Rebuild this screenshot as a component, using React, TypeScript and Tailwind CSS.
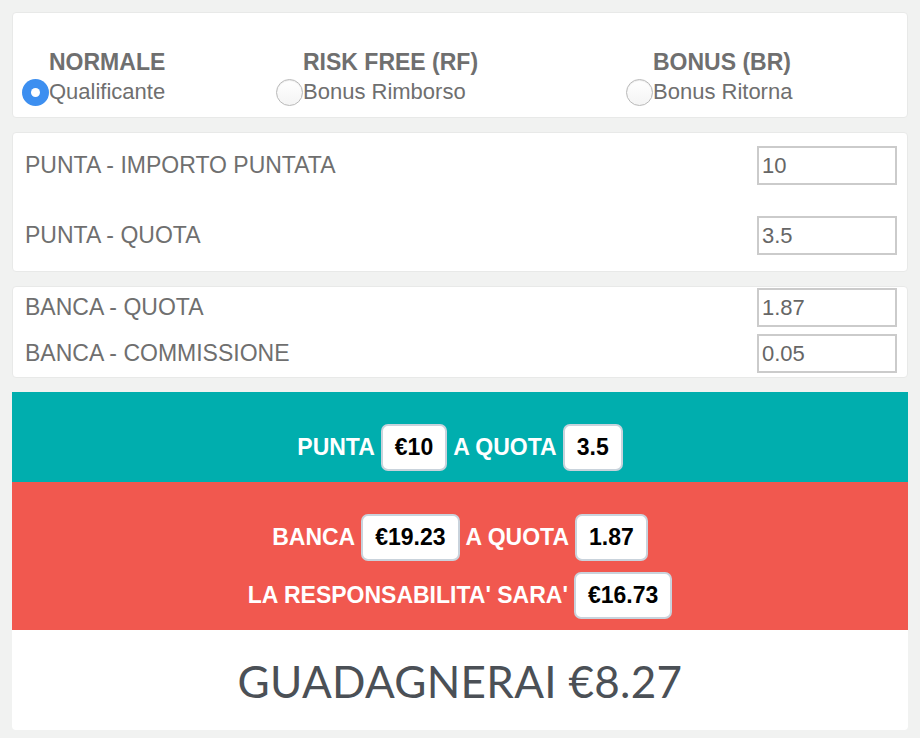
const modes = [
  { title: 'NORMALE', label: 'Qualificante', checked: true, width: 'w-[254px]' },
  { title: 'RISK FREE (RF)', label: 'Bonus Rimborso', checked: false, width: 'w-[350px]' },
  { title: 'BONUS (BR)', label: 'Bonus Ritorna', checked: false, width: 'w-[200px]' },
]

function Radio({ checked }: { checked: boolean }) {
  if (checked) {
    return (
      <span className="w-[27px] h-[27px] rounded-full bg-[#3d8ff0] flex items-center justify-center shrink-0">
        <span className="w-[9px] h-[9px] rounded-full bg-white" />
      </span>
    )
  }
  return (
    <span className="w-[27px] h-[27px] rounded-full bg-gradient-to-b from-white to-[#f4f4f4] border border-[#b9b9b9] shadow-[inset_0_1px_1px_rgba(0,0,0,0.08)] shrink-0" />
  )
}

function Field({ label, value }: { label: string; value: string }) {
  return (
    <div className="flex items-center justify-between pl-3 pr-[10px] h-[39px]">
      <span className="text-[23px] text-[#6f6f6f]">{label}</span>
      <input
        readOnly
        value={value}
        className="w-[140px] h-[39px] border-2 border-[#cbcbcb] px-[3px] text-[22px] text-[#666] bg-white outline-none"
      />
    </div>
  )
}

function Pill({ children }: { children: React.ReactNode }) {
  return (
    <span className="h-[47px] px-[12px] flex items-center bg-white border-2 border-[#c9d3dc] rounded-[7px] text-black">
      {children}
    </span>
  )
}

export default function App() {
  return (
    <div
      className="min-h-[738px] bg-[#f1f2f1] pt-3 px-3 flex flex-col gap-[14px]"
      style={{ fontFamily: '"Liberation Sans", Arial, sans-serif' }}
    >
      <div className="w-[896px] h-[106px] shrink-0 bg-white rounded-[4px] border border-[#e8e9e8] flex items-end pb-[11px] pl-[9px]">
        {modes.map((m) => (
          <div key={m.title} className={`${m.width} flex flex-col`}>
            <span className="pl-[27px] text-[23px] font-bold text-[#6f6f6f] leading-[32px]">{m.title}</span>
            <div className="flex items-center">
              <Radio checked={m.checked} />
              <span className="text-[22px] text-[#6f6f6f] leading-[28px]">{m.label}</span>
            </div>
          </div>
        ))}
      </div>

      <div className="w-[896px] h-[140px] shrink-0 bg-white rounded-[4px] border border-[#e8e9e8] flex flex-col pt-[13px] gap-[31px]">
        <Field label="PUNTA - IMPORTO PUNTATA" value="10" />
        <Field label="PUNTA - QUOTA" value="3.5" />
      </div>

      <div className="w-[896px] h-[92px] shrink-0 bg-white rounded-[4px] border border-[#e8e9e8] flex flex-col pt-[1px] gap-[7px]">
        <Field label="BANCA - QUOTA" value="1.87" />
        <Field label="BANCA - COMMISSIONE" value="0.05" />
      </div>

      <div className="w-[896px] flex flex-col text-[23px] font-bold">
        <div className="h-[90px] bg-[#00aeae] pt-[32px] flex items-start justify-center gap-[6px] text-white">
          <div className="h-[47px] flex items-center gap-[6px]">
            <span>PUNTA</span>
            <Pill>€10</Pill>
            <span>A QUOTA</span>
            <Pill>3.5</Pill>
          </div>
        </div>
        <div className="h-[148px] bg-[#f1584f] pt-[32px] flex flex-col items-center gap-[11px] text-white">
          <div className="flex items-center gap-[6px]">
            <span>BANCA</span>
            <Pill>€19.23</Pill>
            <span>A QUOTA</span>
            <Pill>1.87</Pill>
          </div>
          <div className="flex items-center gap-[6px]">
            <span>LA RESPONSABILITA' SARA'</span>
            <Pill>€16.73</Pill>
          </div>
        </div>
        <div className="bg-white h-[100px] flex items-center justify-center rounded-b-[4px]">
          <span
            className="text-[44px] font-normal text-[#4b5056] tracking-[0.3px] pt-[2px]"
            style={{ fontFamily: 'Lato, "Liberation Sans", sans-serif' }}
          >
            GUADAGNERAI €8.27
          </span>
        </div>
      </div>
    </div>
  )
}
